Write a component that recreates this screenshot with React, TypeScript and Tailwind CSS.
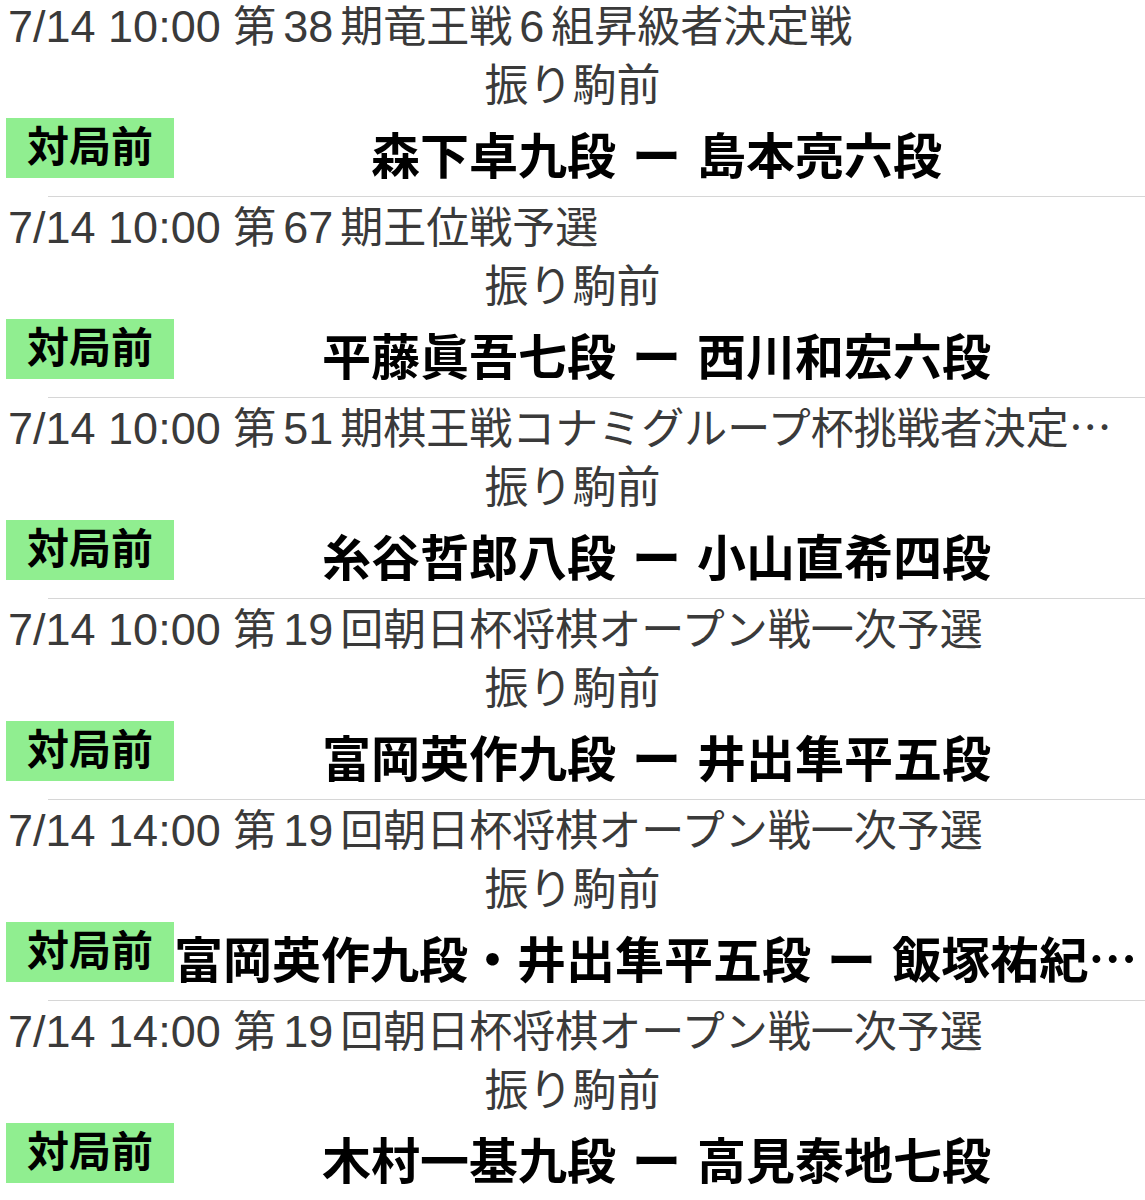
import React from "react";

const games = [
  { time: "7/14 10:00", title: "第38期竜王戦6組昇級者決定戦", players: "森下卓九段 ー 島本亮六段" },
  { time: "7/14 10:00", title: "第67期王位戦予選", players: "平藤眞吾七段 ー 西川和宏六段" },
  { time: "7/14 10:00", title: "第51期棋王戦コナミグループ杯挑戦者決定トーナメント", players: "糸谷哲郎八段 ー 小山直希四段" },
  { time: "7/14 10:00", title: "第19回朝日杯将棋オープン戦一次予選", players: "富岡英作九段 ー 井出隼平五段" },
  { time: "7/14 14:00", title: "第19回朝日杯将棋オープン戦一次予選", players: "富岡英作九段・井出隼平五段 ー 飯塚祐紀七段" },
  { time: "7/14 14:00", title: "第19回朝日杯将棋オープン戦一次予選", players: "木村一基九段 ー 高見泰地七段" },
];

// CJK first where the line can be cut, so the ellipsis is the centred Japanese one
const cjk = "font-['Noto_Sans_CJK_JP',sans-serif]";
const latin = "font-['Liberation_Sans','Noto_Sans_CJK_JP',sans-serif]";

// digits inside the title get a little air on each side, like iOS does
const Title = ({ text }: { text: string }) => (
  <>
    {text.split(/(\d+)/).map((part, i) =>
      /^\d+$/.test(part) ? (
        <span key={i} className={`${latin} text-[45px] mx-[7px]`}>
          {part}
        </span>
      ) : (
        <span key={i}>{part}</span>
      )
    )}
  </>
);

export default function App() {
  return (
    <div className="-mt-[4px] bg-white">
      {games.map((g, i) => (
        <div key={i}>
          <div className="h-[200px] flex flex-col">
            {/* header */}
            <div className={`${cjk} h-[66px] shrink-0 -mt-[6px] pt-[8px] pl-[8px] pr-[33px] text-[43px] leading-[50px] text-[#3a3a3a] truncate`}>
              <span className={`${latin} text-[45px]`}>{g.time} </span>
              <Title text={g.title} />
            </div>
            {/* status */}
            <div className={`${latin} mt-[2px] text-center text-[44px] leading-[56px] text-[#3a3a3a]`}>振り駒前</div>
            {/* badge + players */}
            <div className="mt-[4px] flex items-start">
              <div className={`${latin} shrink-0 ml-[6px] w-[168px] h-[60px] bg-[#90ee90] flex items-center justify-center text-[42px] font-bold text-black leading-none`}>
                対局前
              </div>
              <div className={`${cjk} flex-1 min-w-0 -mt-[1px] py-[6px] pr-[6px] text-center text-[49px] leading-[60px] [word-spacing:5px] font-bold text-black truncate`}>
                {g.players}
              </div>
            </div>
          </div>
          <div className="ml-[48px] h-px bg-[#d6d6d6]" />
        </div>
      ))}
    </div>
  );
}
